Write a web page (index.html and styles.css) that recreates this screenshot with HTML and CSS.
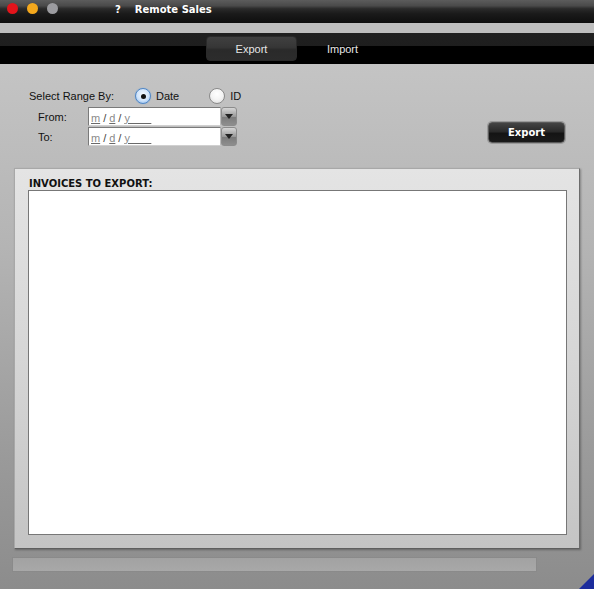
FILE: index.html
```html
<!DOCTYPE html>
<html>
<head>
<meta charset="utf-8">
<title>Remote Sales</title>
<link rel="stylesheet" href="styles.css">
</head>
<body>
<div class="window">
  <div class="titlebar">
    <div class="lights">
      <span class="light red"></span>
      <span class="light orange"></span>
      <span class="light gray"></span>
    </div>
    <span class="help">?</span>
    <span class="title">Remote Sales</span>
  </div>
  <div class="strip"></div>
  <div class="tabbar">
    <div class="tab active">Export</div>
    <div class="tab">Import</div>
  </div>
  <div class="main">
    <div class="top">
      <div class="form">
        <div class="range-row">
          <span class="range-label">Select Range By:</span>
          <span class="radio checked"><span class="dot"></span></span>
          <span class="radio-text">Date</span>
          <span class="radio second"></span>
          <span class="radio-text">ID</span>
        </div>
        <div class="date-row first">
          <span class="date-label">From:</span>
          <div class="input"><span class="ph">m</span><span class="sl">/</span><span class="ph">d</span><span class="sl">/</span><span class="ph">y&nbsp;&nbsp;&nbsp;&nbsp;&nbsp;&nbsp;&nbsp;</span></div>
          <div class="drop"><span class="tri"></span></div>
        </div>
        <div class="date-row">
          <span class="date-label">To:</span>
          <div class="input"><span class="ph">m</span><span class="sl">/</span><span class="ph">d</span><span class="sl">/</span><span class="ph">y&nbsp;&nbsp;&nbsp;&nbsp;&nbsp;&nbsp;&nbsp;</span></div>
          <div class="drop"><span class="tri"></span></div>
        </div>
      </div>
      <button class="export-btn">Export</button>
    </div>
    <div class="panel">
      <div class="panel-title">INVOICES TO EXPORT:</div>
      <div class="list"></div>
    </div>
    <div class="progress"></div>
  </div>
  <div class="grip"></div>
</div>
</body>
</html>
```
FILE: styles.css
```css
html, body {
  margin: 0;
  padding: 0;
}
body {
  width: 594px;
  height: 589px;
  overflow: hidden;
  font-family: "DejaVu Sans", Verdana, sans-serif;
}
.window {
  position: relative;
  width: 594px;
  height: 589px;
  display: flex;
  flex-direction: column;
}
.titlebar {
  height: 23px;
  flex: none;
  display: flex;
  align-items: center;
  background: linear-gradient(#5c5c5c 0%, #4a4a4a 25%, #2a2a2a 38%, #1a1a1a 60%, #0e0e0e 100%);
  color: #fff;
}
.lights {
  display: flex;
  gap: 9px;
  margin-left: 7px;
  margin-top: -7px;
}
.light {
  width: 11px;
  height: 11px;
  border-radius: 50%;
  display: block;
}
.light.red { background: #e3141b; }
.light.orange { background: #f4a81d; }
.light.gray { background: #9c9ca0; }
.help {
  margin-left: 57px;
  font-size: 10px;
  font-weight: bold;
  margin-top: -4px;
  font-family: "DejaVu Sans", sans-serif;
}
.title {
  margin-left: 14px;
  font-size: 10px;
  font-weight: bold;
  margin-top: -4px;
}
.strip {
  height: 10px;
  flex: none;
  background: #bebebe;
}
.tabbar {
  height: 31px;
  flex: none;
  display: flex;
  justify-content: center;
  align-items: flex-start;
  background: linear-gradient(#202020 0px, #1e1e1e 13px, #000 13px, #000 31px);
}
.tab {
  width: 91px;
  height: 25px;
  margin-top: 3px;
  border-radius: 4px;
  display: flex;
  align-items: center;
  justify-content: center;
  color: #e6e6e6;
  font-family: "Liberation Sans", Arial, sans-serif;
  font-size: 11px;
  box-sizing: border-box;
}
.tab.active {
  background: linear-gradient(#404040, #363636 45%, #2a2a2a 55%, #2c2c2c);
  border: 1px solid #2a2a2a;
}
.main {
  flex: 1;
  background: linear-gradient(#c4c4c4 0%, #b4b4b4 35%, #9a9a9a 75%, #8c8c8c 100%);
  padding: 24px 0 0 0;
}
.top {
  display: flex;
  align-items: flex-start;
}
.form {
  padding-left: 29px;
  font-family: "Liberation Sans", Arial, sans-serif;
  font-size: 11px;
  color: #111;
}
.range-row {
  display: flex;
  align-items: center;
  height: 16px;
}
.range-label {
  width: 106px;
}
.radio {
  width: 16px;
  height: 16px;
  box-sizing: border-box;
  border-radius: 50%;
  border: 1px solid #8a8a8a;
  background: radial-gradient(circle at 50% 35%, #ffffff 0%, #f4f4f4 50%, #d8d8d8 100%);
  display: flex;
  align-items: center;
  justify-content: center;
}
.radio.checked {
  border: 1px solid #4f86c6;
  background: radial-gradient(circle at 50% 40%, #f6fbff 0%, #cfe3fa 55%, #7eb1e8 100%);
  box-shadow: 0 0 1px #5a9ae0;
}
.radio.second {
  margin-left: 30px;
}
.dot {
  width: 5px;
  height: 5px;
  border-radius: 50%;
  background: #111;
}
.radio-text {
  margin-left: 5px;
}
.date-row {
  display: flex;
  align-items: center;
  height: 19px;
  margin-top: 1px;
}
.date-row.first {
  margin-top: 3px;
}
.date-label {
  width: 59px;
  padding-left: 9px;
  box-sizing: border-box;
}
.input {
  width: 133px;
  height: 19px;
  box-sizing: border-box;
  background: #fff;
  border: 1px solid #7a7a7a;
  border-right-color: #bdbdbd;
  border-bottom-color: #d0d0d0;
  padding: 2px 0 0 1px;
  font-size: 11px;
  color: #8a8a8a;
  display: flex;
  align-items: center;
}
.ph {
  text-decoration: underline;
  text-decoration-color: #6a6a6a;
  padding: 0 1px;
}
.sl {
  color: #444;
  padding: 0 2px;
}
.drop {
  width: 16px;
  height: 19px;
  box-sizing: border-box;
  border: 1px solid #8c8c8c;
  border-radius: 3px;
  background: linear-gradient(#d6d6d6, #9a9a9a 50%, #7a7a7a 51%, #8e8e8e);
  display: flex;
  align-items: center;
  justify-content: center;
}
.tri {
  width: 0;
  height: 0;
  border-left: 4px solid transparent;
  border-right: 4px solid transparent;
  border-top: 5px solid #222;
}
.export-btn {
  margin: 34px 29px 0 auto;
  width: 77px;
  height: 21px;
  padding: 0;
  border-radius: 4px;
  border: 1px solid #5a5a5a;
  box-shadow: 0 0 0 1px #9a9a9a;
  background: linear-gradient(#444 0%, #2a2a2a 45%, #141414 55%, #1a1a1a 100%);
  color: #fff;
  font-family: "DejaVu Sans", Verdana, sans-serif;
  font-size: 10px;
  font-weight: bold;
}
.panel {
  margin: 22px 0 0 14px;
  width: 566px;
  height: 381px;
  box-sizing: border-box;
  background: linear-gradient(#e4e4e4 0%, #d6d6d6 50%, #c4c4c4 100%);
  border: 1px solid #a8a8a8;
  border-right-color: #6c6c6c;
  border-bottom-color: #5e5e5e;
  box-shadow: 1px 1px 2px rgba(0, 0, 0, 0.3);
  padding: 9px 12px 13px 13px;
  display: flex;
  flex-direction: column;
}
.panel-title {
  font-family: "DejaVu Sans", Verdana, sans-serif;
  font-weight: bold;
  font-size: 10px;
  color: #111;
  height: 12px;
  line-height: 12px;
  padding-left: 1px;
}
.list {
  margin-top: 0;
  flex: 1;
  background: #fff;
  border: 1px solid #777;
}
.progress {
  margin: 8px 0 0 12px;
  width: 525px;
  height: 15px;
  box-sizing: border-box;
  border: 1px solid #8a8a8a;
  background: linear-gradient(#a2a2a2, #a8a8a8);
}
.grip {
  position: absolute;
  right: 0;
  bottom: 0;
  width: 0;
  height: 0;
  border-left: 15px solid transparent;
  border-bottom: 15px solid #1c2c9c;
}
```
